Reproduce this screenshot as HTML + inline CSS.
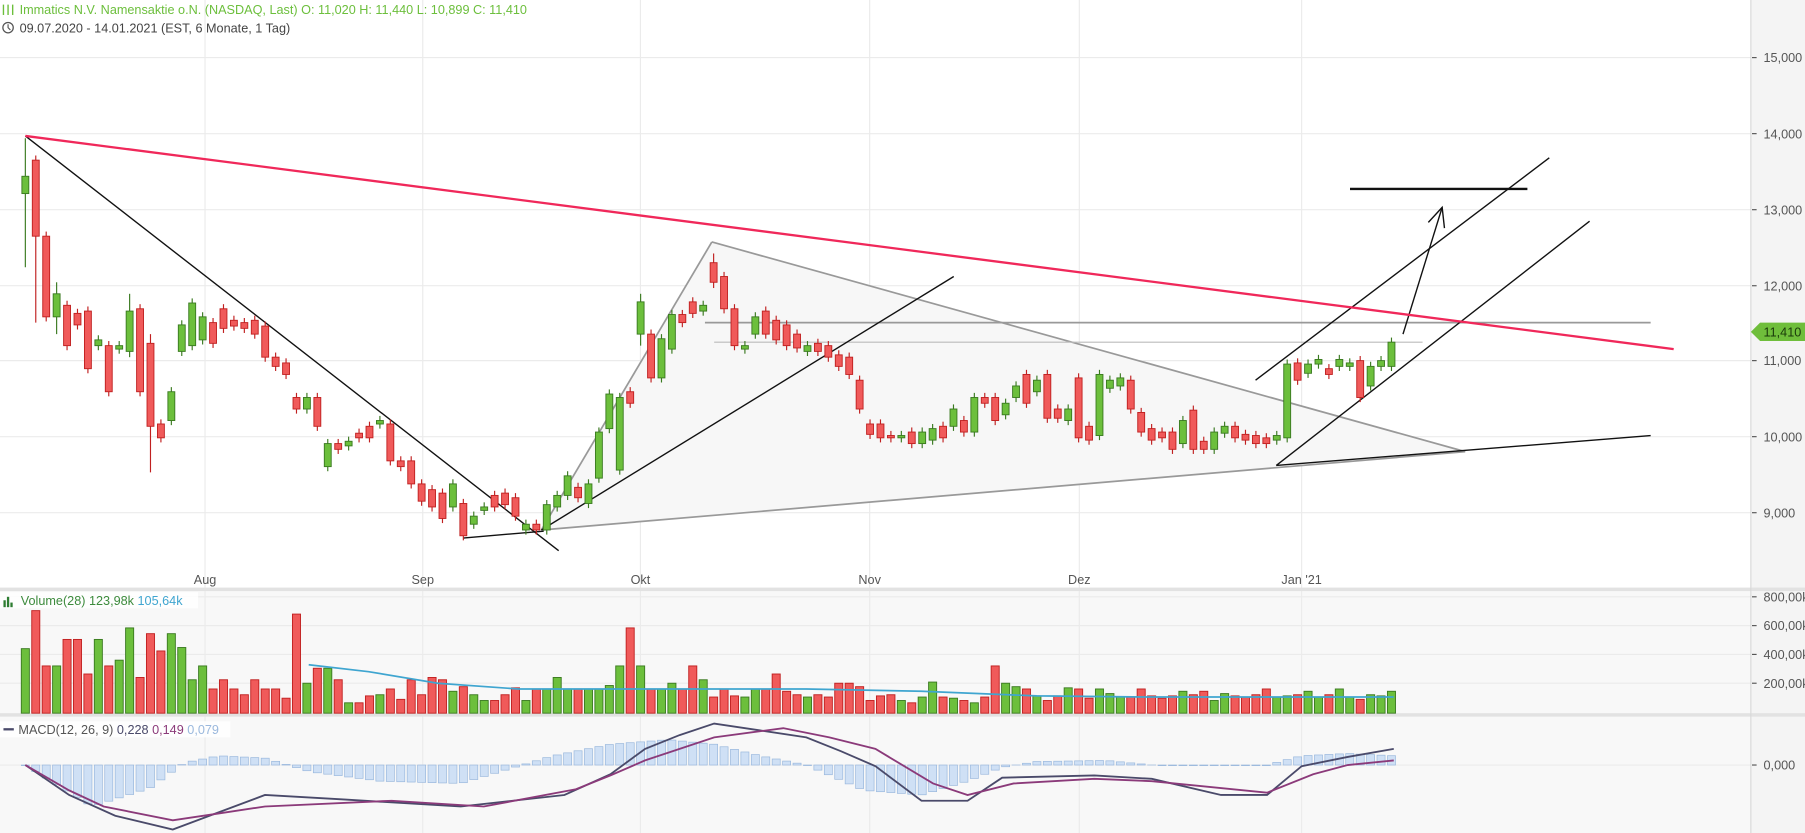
<!DOCTYPE html>
<html><head><meta charset="utf-8"><style>
html,body{margin:0;padding:0;background:#fff;overflow:hidden}
svg{display:block}
text{font-family:"Liberation Sans",Arial,sans-serif}
</style></head><body>
<svg id="s" width="1805" height="833" viewBox="0 0 1567 723" preserveAspectRatio="none" xmlns="http://www.w3.org/2000/svg">
<rect x="0" y="0" width="1567" height="723" fill="#fff"/>
<rect x="0" y="513" width="1520" height="107" fill="#f8f8f8"/>
<rect x="0" y="622" width="1520" height="101" fill="#f8f8f8"/>
<rect x="1520" y="0" width="47" height="723" fill="#f4f4f4"/>
<g stroke="#ebebeb" stroke-width="1">
<line x1="0" y1="50" x2="1520" y2="50"/><line x1="0" y1="116" x2="1520" y2="116"/><line x1="0" y1="182" x2="1520" y2="182"/><line x1="0" y1="248" x2="1520" y2="248"/><line x1="0" y1="313" x2="1520" y2="313"/><line x1="0" y1="379" x2="1520" y2="379"/><line x1="0" y1="445" x2="1520" y2="445"/>
<line x1="0" y1="518" x2="1520" y2="518"/><line x1="0" y1="543" x2="1520" y2="543"/><line x1="0" y1="568" x2="1520" y2="568"/><line x1="0" y1="593" x2="1520" y2="593"/>
<line x1="0" y1="664" x2="1520" y2="664"/>
<line x1="178" y1="0" x2="178" y2="723"/><line x1="367" y1="0" x2="367" y2="723"/><line x1="556" y1="0" x2="556" y2="723"/><line x1="755" y1="0" x2="755" y2="723"/><line x1="937" y1="0" x2="937" y2="723"/><line x1="1130" y1="0" x2="1130" y2="723"/>
</g>
<rect x="0" y="510" width="1567" height="3" fill="#e2e2e2"/>
<rect x="0" y="619" width="1567" height="3" fill="#e2e2e2"/>
<line x1="1520" y1="0" x2="1520" y2="723" stroke="#d8d8d8"/>
<g fill="#555" font-size="11">
<text x="1531" y="54">15,000</text><text x="1531" y="120">14,000</text><text x="1531" y="186">13,000</text><text x="1531" y="252">12,000</text><text x="1531" y="317">11,000</text><text x="1531" y="383">10,000</text><text x="1531" y="449">9,000</text>
<text x="1531" y="522">800,00k</text><text x="1531" y="547">600,00k</text><text x="1531" y="572">400,00k</text><text x="1531" y="597">200,00k</text>
<text x="1531" y="668">0,000</text>
<text x="178" y="507" text-anchor="middle">Aug</text><text x="367" y="507" text-anchor="middle">Sep</text><text x="556" y="507" text-anchor="middle">Okt</text><text x="755" y="507" text-anchor="middle">Nov</text><text x="937" y="507" text-anchor="middle">Dez</text><text x="1130" y="507" text-anchor="middle">Jan '21</text>
</g>
<g stroke="#555"><line x1="1521" y1="50" x2="1525" y2="50"/><line x1="1521" y1="116" x2="1525" y2="116"/><line x1="1521" y1="182" x2="1525" y2="182"/><line x1="1521" y1="248" x2="1525" y2="248"/><line x1="1521" y1="313" x2="1525" y2="313"/><line x1="1521" y1="379" x2="1525" y2="379"/><line x1="1521" y1="445" x2="1525" y2="445"/><line x1="1521" y1="518" x2="1525" y2="518"/><line x1="1521" y1="543" x2="1525" y2="543"/><line x1="1521" y1="568" x2="1525" y2="568"/><line x1="1521" y1="593" x2="1525" y2="593"/><line x1="1521" y1="664" x2="1525" y2="664"/></g>
<polygon points="1520,288 1528,280 1567,280 1567,296 1528,296" fill="#6fbe3b"/>
<text x="1531" y="292" font-size="11" fill="#1a3a0a">11,410</text>
<!-- drawings -->
<polygon points="618,210 1272,392 470,460" fill="#f7f7f7"/>
<line x1="618" y1="210" x2="1272" y2="392" stroke="#999" stroke-width="1.5"/>
<line x1="470" y1="460" x2="618" y2="210" stroke="#999" stroke-width="1.5"/>
<line x1="470" y1="460" x2="1272" y2="392" stroke="#999" stroke-width="1.5"/>
<line x1="612" y1="280" x2="1433" y2="280" stroke="#999" stroke-width="1.5"/>
<line x1="620" y1="297" x2="1235" y2="297" stroke="#bbb" stroke-width="1"/>
<line x1="22" y1="118" x2="485" y2="478" stroke="#111" stroke-width="1.2"/>
<line x1="402" y1="467" x2="472" y2="461" stroke="#111" stroke-width="1.2"/>
<line x1="470" y1="460" x2="828" y2="240" stroke="#111" stroke-width="1.2"/>
<line x1="1108" y1="404" x2="1433" y2="378" stroke="#111" stroke-width="1.2"/>
<line x1="1090" y1="330" x2="1345" y2="137" stroke="#111" stroke-width="1.2"/>
<line x1="1108" y1="404" x2="1380" y2="192" stroke="#111" stroke-width="1.2"/>
<line x1="1218" y1="290" x2="1252" y2="180" stroke="#111" stroke-width="1.2"/>
<polyline points="1240,193 1252,180 1254,198" fill="none" stroke="#111" stroke-width="1.2"/>
<line x1="1172" y1="164" x2="1326" y2="164" stroke="#111" stroke-width="2"/>
<g id="candles"></g>
<line x1="22" y1="118" x2="1453" y2="303" stroke="#f0285a" stroke-width="2"/>
<g id="vol"></g>
<g id="macd"></g>
<!-- header -->
<g fill="#6cbf3c" font-size="11">
<g stroke="#6cbf3c" stroke-width="1.2"><line x1="3" y1="4" x2="3" y2="13"/><line x1="7" y1="4" x2="7" y2="13"/><line x1="11" y1="4" x2="11" y2="13"/></g>
<text x="17" y="12">Immatics N.V. Namensaktie  o.N. (NASDAQ, Last)  O: 11,020  H: 11,440  L: 10,899  C: 11,410</text>
</g>
<circle cx="7" cy="24" r="4.5" fill="none" stroke="#555" stroke-width="1.1"/><polyline points="7,21 7,24 9,26" fill="none" stroke="#555"/>
<text x="17" y="28" font-size="11" fill="#444">09.07.2020 - 14.01.2021   (EST, 6 Monate, 1 Tag)</text>
<rect x="0" y="514" width="172" height="14" fill="#fff" opacity="0.85"/>
<g fill="#2e7d32"><rect x="3" y="521" width="2" height="6"/><rect x="6" y="518" width="2" height="9"/><rect x="9" y="523" width="2" height="4"/></g>
<text x="18" y="525" font-size="11" fill="#3d8b3d">Volume(28)  123,98k  <tspan fill="#3fa5d0">105,64k</tspan></text>
<rect x="0" y="626" width="200" height="14" fill="#fff" opacity="0.85"/>
<line x1="3" y1="633" x2="12" y2="633" stroke="#4a4a6a" stroke-width="2"/>
<text x="16" y="637" font-size="11" fill="#555">MACD(12, 26, 9)  <tspan fill="#4a4a6a">0,228</tspan>  <tspan fill="#8b3a7a">0,149</tspan>  <tspan fill="#9ab8dd">0,079</tspan></text>
</svg>
<script>
var NS="http://www.w3.org/2000/svg";
function el(p,t,a){var e=document.createElementNS(NS,t);for(var k in a)e.setAttribute(k,a[k]);p.appendChild(e);return e;}
var C=[[153,168,'g',120,232],[139,205,'r',135,280],[205,275,'r'],[255,275,'g',245,290],[265,300,'r'],[272,282,'r'],[270,320,'r'],[295,300,'g'],[300,340,'r'],[300,303,'g'],[270,305,'g',255,310],[268,340,'r'],[298,370,'r',290,410],[368,380,'r'],[340,365,'g'],[282,305,'g'],[263,300,'g'],[275,295,'g'],[280,298,'r'],[268,285,'r'],[278,283,'r'],[280,285,'r'],[278,290,'r'],[283,310,'r'],[310,318,'r'],[315,325,'r'],[345,355,'r'],[345,355,'g'],[345,370,'r'],[385,405,'g'],[385,390,'r'],[383,387,'g'],[376,380,'r'],[370,380,'r'],[365,368,'g'],[368,400,'r'],[400,405,'r'],[400,420,'r'],[420,435,'r'],[425,440,'r'],[428,450,'r'],[420,440,'g'],[437,465,'r'],[448,455,'g'],[440,443,'g'],[430,440,'r'],[428,438,'r'],[432,448,'r'],[455,460,'g'],[455,460,'r'],[438,460,'g'],[430,440,'g'],[413,430,'g'],[423,432,'r'],[420,437,'g'],[375,415,'g'],[342,372,'g'],[345,408,'g'],[340,350,'r'],[262,290,'g',255,300],[290,328,'r'],[294,328,'g'],[273,303,'g'],[273,280,'r'],[262,272,'r'],[265,270,'g'],[228,245,'r',220,250],[240,268,'r'],[268,300,'r'],[300,303,'g'],[275,290,'g'],[270,290,'r'],[278,295,'r'],[282,300,'r'],[290,302,'r'],[300,305,'g'],[298,305,'r'],[300,310,'r'],[308,318,'r'],[310,325,'r'],[330,355,'r'],[368,377,'r'],[368,380,'r'],[378,380,'r'],[378,380,'g'],[375,385,'r'],[375,385,'g'],[372,382,'g'],[370,380,'r'],[355,370,'g'],[365,375,'r'],[345,375,'g'],[345,350,'r'],[345,365,'r'],[350,360,'g'],[335,345,'g'],[325,350,'r'],[330,340,'g'],[325,363,'r'],[355,363,'r'],[355,365,'g'],[328,380,'r'],[370,382,'r'],[325,378,'g'],[330,337,'g'],[328,335,'g'],[330,355,'r'],[358,375,'r'],[372,382,'r'],[375,380,'r'],[375,390,'r'],[365,385,'g'],[356,390,'r'],[383,390,'r'],[375,390,'g'],[370,376,'g'],[370,380,'r'],[377,382,'r'],[378,385,'r'],[380,385,'r'],[378,382,'g'],[316,380,'g'],[315,330,'r'],[316,324,'g'],[312,316,'g'],[320,325,'r'],[312,318,'g'],[315,318,'g'],[313,345,'r'],[318,335,'g'],[313,318,'g'],[297,318,'g']];
var V=[563,530,578,578,555,555,585,555,578,573,545,588,550,565,550,562,590,578,598,590,598,603,590,598,598,606,533,593,580,580,590,610,610,604,603,598,607,590,603,588,590,600,596,603,608,608,603,597,608,598,598,588,598,598,598,598,595,578,545,578,598,598,593,598,578,590,605,598,604,605,598,598,585,600,603,605,603,605,593,593,596,608,604,603,608,610,605,592,605,606,608,610,605,578,593,596,598,604,608,604,597,598,606,598,602,605,605,598,604,606,604,600,603,600,608,602,604,605,603,598,605,604,603,600,605,603,598,605,607,603,604];
var cg=document.getElementById('candles'),vg=document.getElementById('vol'),mg=document.getElementById('macd');
var step=(1208-22)/(C.length-1);
C.forEach(function(c,i){var x=22+i*step,g=c[2]=='g';var fill=g?'#6cbf3c':'#f05a5a',st=g?'#3a7a20':'#c02020';
var hi=c[3]||c[0]-4,lo=c[4]||c[1]+4;
el(cg,'line',{x1:x,y1:hi,x2:x,y2:lo,stroke:st,'stroke-width':1});
el(cg,'rect',{x:x-3,y:c[0],width:6,height:Math.max(1,c[1]-c[0]),fill:fill,stroke:st,'stroke-width':0.8});
var vt=V[i]||600;
el(vg,'rect',{x:x-3.5,y:vt,width:7,height:619-vt,fill:fill,stroke:st,'stroke-width':0.8});
});
el(vg,'polyline',{points:'268,577 320,583 380,593 450,598 600,598 700,598 800,600 900,604 1000,605 1100,605 1210,605',fill:'none',stroke:'#3fa5d0','stroke-width':1.5});
// histogram
function hval(x){var pts=[[22,0],[80,36],[130,20],[160,-2],[190,-8],[230,-6],[270,6],[330,14],[400,16],[440,4],[480,-8],[530,-18],[580,-22],[620,-18],[660,-8],[700,0],[750,22],[800,26],[840,14],[870,2],[900,-3],[960,-4],[1000,0],[1100,0],[1130,-8],[1170,-10],[1210,-8]];
for(var k=1;k<pts.length;k++){if(x<=pts[k][0]){var a=pts[k-1],b=pts[k];return a[1]+(b[1]-a[1])*(x-a[0])/(b[0]-a[0]);}}return -8;}
C.forEach(function(c,i){var x=22+i*step,h=hval(x);
el(mg,'rect',{x:x-3.5,y:h<0?664+h:664,width:7,height:Math.abs(h)||0.5,fill:'#cfe0f5',stroke:'#9ab8dd','stroke-width':0.6});});
el(mg,'polyline',{points:'22,664 60,690 100,708 150,720 190,705 230,690 300,694 400,700 490,690 530,672 560,650 590,638 620,628 660,634 700,640 730,652 760,665 800,695 840,695 870,675 950,673 1000,676 1060,690 1100,690 1130,665 1170,657 1210,650',fill:'none',stroke:'#4a4a6a','stroke-width':1.6});
el(mg,'polyline',{points:'22,664 60,686 90,700 150,712 190,706 230,700 340,695 420,700 500,685 530,673 560,660 620,640 680,632 720,640 760,650 810,680 840,690 880,680 950,676 1000,678 1100,688 1140,672 1170,664 1210,660',fill:'none',stroke:'#8b3a7a','stroke-width':1.6});
</script>
</body></html>
